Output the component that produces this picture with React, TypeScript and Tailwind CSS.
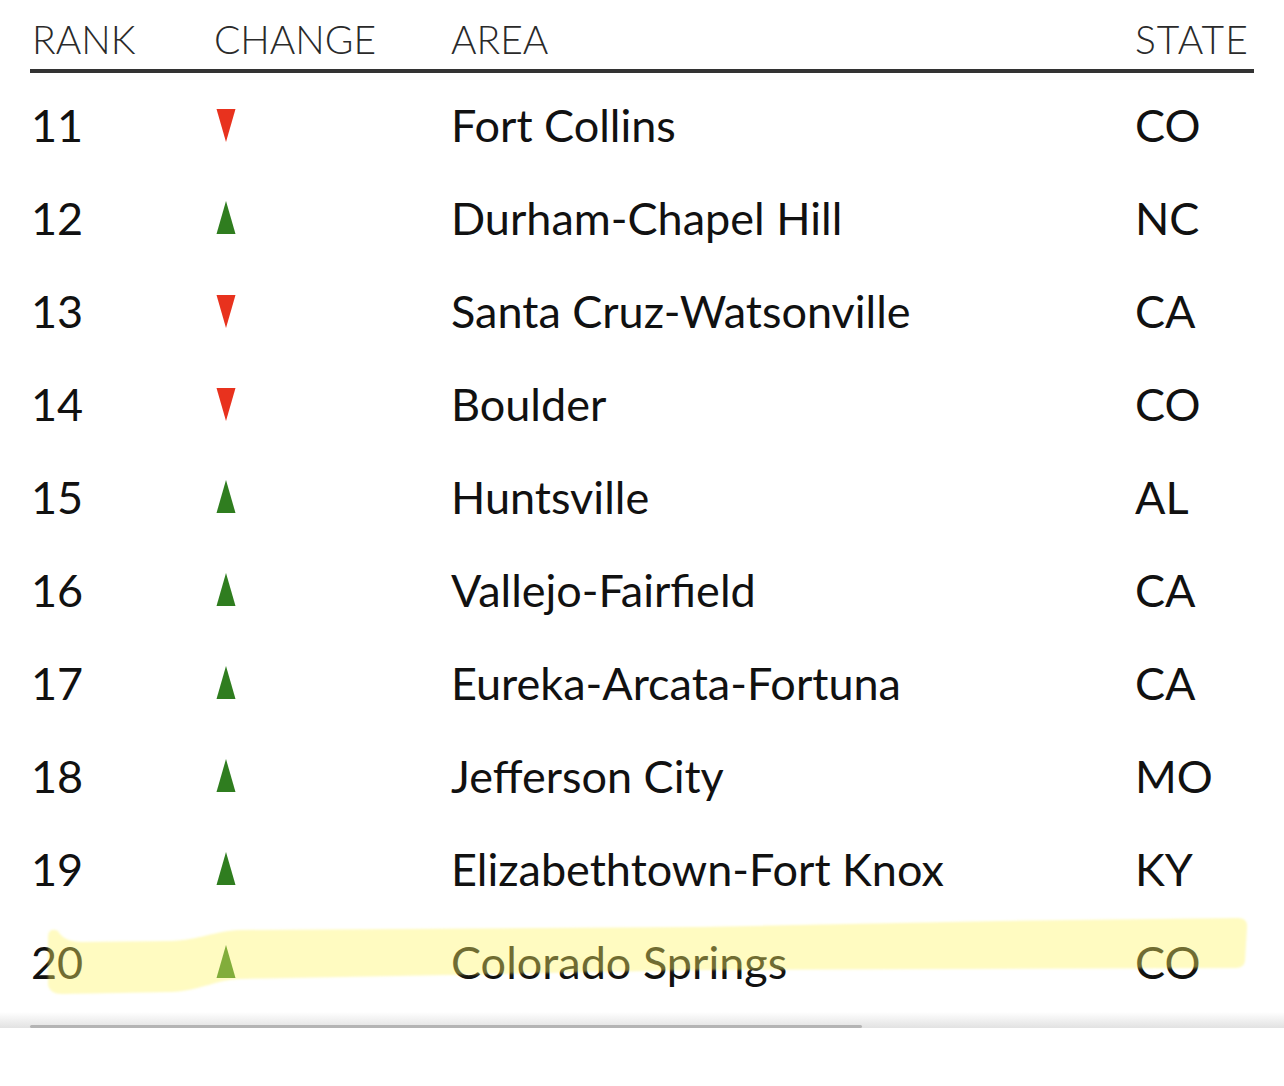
import React from "react";

type Row = { rank: number; up: boolean; area: string; state: string };

const rows: Row[] = [
  { rank: 11, up: false, area: "Fort Collins", state: "CO" },
  { rank: 12, up: true, area: "Durham-Chapel Hill", state: "NC" },
  { rank: 13, up: false, area: "Santa Cruz-Watsonville", state: "CA" },
  { rank: 14, up: false, area: "Boulder", state: "CO" },
  { rank: 15, up: true, area: "Huntsville", state: "AL" },
  { rank: 16, up: true, area: "Vallejo-Fairfield", state: "CA" },
  { rank: 17, up: true, area: "Eureka-Arcata-Fortuna", state: "CA" },
  { rank: 18, up: true, area: "Jefferson City", state: "MO" },
  { rank: 19, up: true, area: "Elizabethtown-Fort Knox", state: "KY" },
  { rank: 20, up: true, area: "Colorado Springs", state: "CO" },
];

function Tri({ up }: { up: boolean }) {
  return (
    <svg width="20" height="34" viewBox="0 0 20 34" className="block">
      {up ? (
        <polygon points="10,0 19.5,33 0.5,33" fill="#2f7d1f" />
      ) : (
        <polygon points="0.5,1 19.5,1 10,34" fill="#e8321e" />
      )}
    </svg>
  );
}

export default function App() {
  return (
    <div
      className="relative w-[1284px] h-[1086px] bg-white overflow-hidden"
      style={{ fontFamily: "Lato, 'Open Sans', sans-serif" }}
    >
      <div className="pl-[30px] pr-[30px]">
        <div className="flex h-[73px] items-start pt-[16px] border-b-[4px] border-[#333] text-[#2a2a2a] text-[39px] leading-[46px] font-light">
          <div className="w-[184px] pl-[2px]">RANK</div>
          <div className="w-[237px]">CHANGE</div>
          <div className="flex-1">AREA</div>
          <div className="w-[119px] tracking-[1px]">STATE</div>
        </div>
        <div className="pt-[5px]">
          {rows.map((r) => (
            <div
              key={r.rank}
              className="flex h-[93px] items-center text-[#111] text-[45px] leading-[54px]"
            >
              <div className="w-[184px] pl-[1px]">{r.rank}</div>
              <div className="w-[237px] pl-[2px]">
                <Tri up={r.up} />
              </div>
              <div className="flex-1">{r.area}</div>
              <div className="w-[119px]">{r.state}</div>
            </div>
          ))}
        </div>
      </div>

      <svg
        className="absolute left-0 top-0 pointer-events-none"
        width="1284"
        height="1086"
        viewBox="0 0 1284 1086"
      >
        <defs>
          <filter id="soft" x="-5%" y="-20%" width="110%" height="140%">
            <feGaussianBlur stdDeviation="1.2" />
          </filter>
        </defs>
        <path
          d="M 48 936 Q 49 927 58 931 Q 64 942 82 942 L 170 941 C 200 940 214 931 240 930 L 700 927 L 1000 921 L 1238 918 Q 1248 918 1247 928 L 1245 961 Q 1244 968 1236 968 L 700 970 L 240 979 C 214 980 200 991 170 992 L 62 994 Q 50 994 48 985 Z"
          fill="rgba(255,245,100,0.4)"
          filter="url(#soft)"
        />
      </svg>

      <div className="absolute left-0 top-[1012px] w-full h-[16px] bg-gradient-to-b from-white to-[#e2e2e2] flex items-end pl-[30px]">
        <div className="w-[832px] h-[3px] rounded-full bg-[#b4b4b4]" />
      </div>
    </div>
  );
}
